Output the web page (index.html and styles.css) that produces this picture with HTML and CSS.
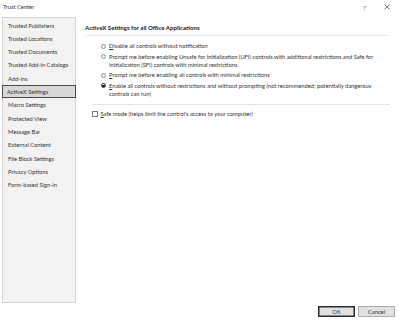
FILE: index.html
```html
<!DOCTYPE html>
<html lang="en">
<head>
    <meta charset="UTF-8">
    <title>Trust Center</title>
    <link rel="stylesheet" href="styles.css">
</head>
<body>
    <div class="dialog">
        <div class="titlebar">
            <span class="title">Trust Center</span>
            <span class="help">?</span>
            <span class="close">
                <svg width="6" height="6" viewBox="0 0 6 6"><path d="M0.5 0.5L5.5 5.5M5.5 0.5L0.5 5.5" stroke="#444" stroke-width="0.7"/></svg>
            </span>
        </div>
        <div class="main">
            <ul class="sidebar">
                <li>Trusted Publishers</li>
                <li>Trusted Locations</li>
                <li>Trusted Documents</li>
                <li>Trusted Add-in Catalogs</li>
                <li>Add-ins</li>
                <li class="active">ActiveX Settings</li>
                <li>Macro Settings</li>
                <li>Protected View</li>
                <li>Message Bar</li>
                <li>External Content</li>
                <li>File Block Settings</li>
                <li>Privacy Options</li>
                <li>Form-based Sign-in</li>
            </ul>
            <div class="content">
                <h1>ActiveX Settings for all Office Applications</h1>
                <div class="options">
                    <div class="option">
                        <span class="radio"></span>
                        <span class="label"><span class="key">D</span>isable all controls without notification</span>
                    </div>
                    <div class="option">
                        <span class="radio"></span>
                        <span class="label">Prompt me before enabling Unsafe for Initialization (UFI) controls with additional restrictions and Safe for Initialization (SFI) controls with minimal restrictions</span>
                    </div>
                    <div class="option">
                        <span class="radio"></span>
                        <span class="label"><span class="key">P</span>rompt me before enabling all controls with minimal restrictions</span>
                    </div>
                    <div class="option">
                        <span class="radio checked"></span>
                        <span class="label"><span class="key">E</span>nable all controls without restrictions and without prompting (not recommended; potentially dangerous controls can run)</span>
                    </div>
                </div>
                <div class="safe">
                    <span class="checkbox"></span>
                    <span class="label"><span class="key">S</span>afe mode (helps limit the control's access to your computer)</span>
                </div>
            </div>
        </div>
        <div class="footer">
            <button class="btn default">OK</button>
            <button class="btn">Cancel</button>
        </div>
    </div>
</body>
</html>
```

FILE: styles.css
```css
body {
    margin: 0;
    background: #fff;
    font-family: 'Lato', 'Noto Sans', sans-serif;
    font-size: 5.75px;
    color: #333;
}
.dialog {
    width: 399px;
    height: 321px;
    display: flex;
    flex-direction: column;
}
.titlebar {
    height: 17px;
    display: flex;
    align-items: center;
    padding: 0 9px 4px 3px;
    box-sizing: border-box;
}
.title {
    flex: 1;
}
.help {
    font-size: 6.5px;
    color: #555;
    margin-right: 18px;
    margin-top: 1px;
}
.close {
    display: flex;
    margin-top: 1px;
}
.main {
    display: flex;
    height: 286px;
    padding: 0 3px 0 2px;
}
.sidebar {
    list-style: none;
    margin: 0;
    padding: 0.5px 0 0 0;
    width: 74px;
    box-sizing: border-box;
    background: #f2f2f2;
    border: 1px solid #d3d3d3;
}
.sidebar li {
    height: 13.33px;
    line-height: 13.33px;
    padding-left: 5px;
    box-sizing: border-box;
    white-space: nowrap;
}
.sidebar li.active {
    background: #d8d8d8;
    border: 1px solid #4a4a4a;
    line-height: 11.33px;
    padding-left: 4px;
    margin: 0 -1px;
}
.content {
    flex: 1;
    padding: 7px 8px 0 9px;
}
h1 {
    margin: 0;
    font-size: 6.1px;
    font-weight: bold;
    line-height: 8px;
    padding-bottom: 3px;
    border-bottom: 1px solid #e6e6e6;
    color: #222;
}
.options {
    display: flex;
    flex-direction: column;
    gap: 2.5px;
    padding: 6px 0 6px 8.5px;
    margin-left: 7px;
    margin-right: -2px;
    border-bottom: 1px solid #e3e3e3;
}
.option {
    display: flex;
    align-items: flex-start;
    line-height: 8px;
    margin-right: 2px;
}
.key {
    text-decoration: underline;
}
.radio {
    flex: none;
    width: 5px;
    height: 5px;
    margin-top: 1.5px;
    margin-right: 3.5px;
    border: 0.8px solid #8a8a8a;
    border-radius: 50%;
    box-sizing: border-box;
    position: relative;
    background: #fff;
}
.radio.checked {
    border-color: #333;
}
.radio.checked::after {
    content: "";
    position: absolute;
    left: 0.9px;
    top: 0.9px;
    width: 2.4px;
    height: 2.4px;
    border-radius: 50%;
    background: #111;
}
.safe {
    display: flex;
    align-items: flex-start;
    line-height: 8px;
    margin: 5.5px 0 0 7px;
}
.checkbox {
    flex: none;
    width: 5.5px;
    height: 5.5px;
    margin-top: 1px;
    margin-right: 3px;
    border: 0.8px solid #7a7a7a;
    box-sizing: border-box;
    background: #fff;
}
.footer {
    flex: 1;
    display: flex;
    justify-content: flex-end;
    align-items: flex-start;
    gap: 3px;
    padding: 3px 4px 0 0;
}
.btn {
    width: 37px;
    height: 11px;
    padding: 0;
    font-family: inherit;
    font-size: 5.75px;
    color: #333;
    background: #e1e1e1;
    border: 1px solid #adadad;
}
.btn.default {
    border: 1px solid #2b2b2b;
    box-shadow: inset 0 0 0 0.5px #2b2b2b;
}
```
